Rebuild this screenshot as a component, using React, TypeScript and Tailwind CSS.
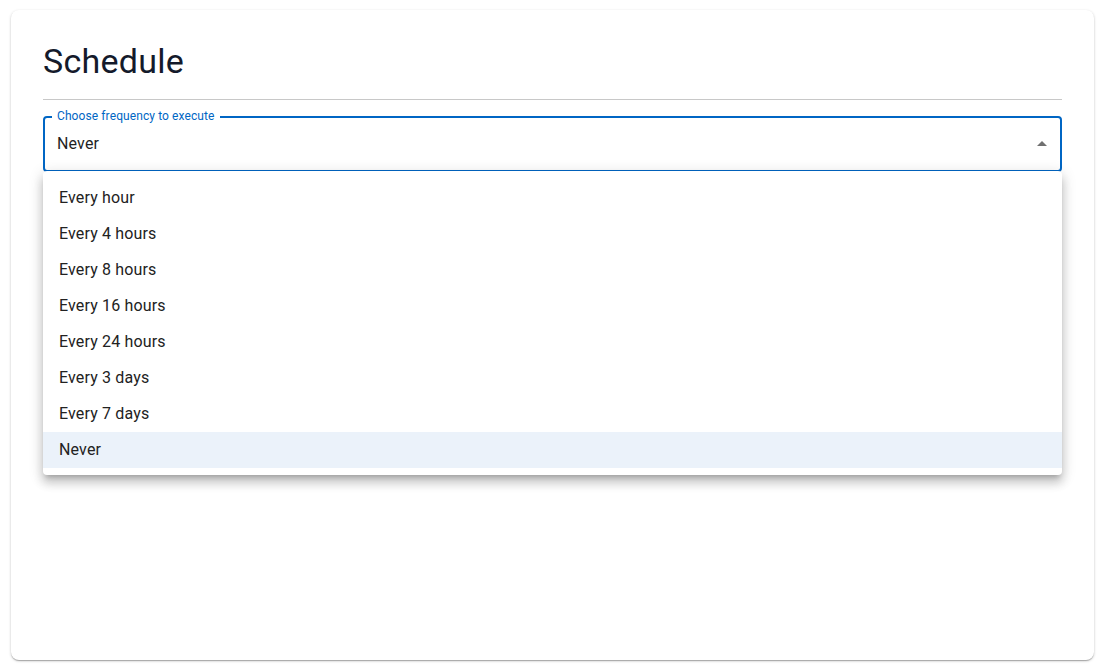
import React from "react";

const items = [
  "Every hour",
  "Every 4 hours",
  "Every 8 hours",
  "Every 16 hours",
  "Every 24 hours",
  "Every 3 days",
  "Every 7 days",
  "Never",
];

export default function App() {
  return (
    <div className="w-[1105px] h-[671px] bg-white p-[10px] pl-[11px] pr-[11px]" style={{ fontFamily: "Roboto, 'Liberation Sans', sans-serif" }}>
      <div className="relative h-[650px] rounded-[8px] bg-white px-[32px] pt-[32px] shadow-[0_1px_3px_rgba(0,0,0,0.2),0_1px_1px_rgba(0,0,0,0.14),0_2px_1px_-1px_rgba(0,0,0,0.12)]">
        <h1 className="text-[34px] leading-[38px] text-[#141a2b] font-normal tracking-[0.25px]">Schedule</h1>
        <div className="mt-[19px] h-px bg-[#c8c8c8]" />
        <div className="relative mt-[16px]">
          <div className="relative h-[56px] rounded-[4px] border-2 border-[#0066c4] flex items-center pl-[12px] pr-[6px]">
            <span className="text-[16px] text-[#1f1f1f] tracking-[0.15px]">Never</span>
            <span className="absolute -top-[10px] left-[7px] bg-white px-[5px] text-[12px] leading-[16px] text-[#0066c4] tracking-[0.1px]">
              Choose frequency to execute
            </span>
            <svg className="ml-auto" width="24" height="24" viewBox="0 0 24 24">
              <path d="M7 14l5-5 5 5z" fill="#707070" />
            </svg>
          </div>
          <div className="absolute left-0 top-[55px] w-[1019px] rounded-[4px] bg-white pt-[9px] pb-[7px] shadow-[0_5px_5px_-3px_rgba(0,0,0,0.2),0_8px_10px_1px_rgba(0,0,0,0.14),0_3px_14px_2px_rgba(0,0,0,0.12)] z-10">
            {items.map((it) => (
              <div
                key={it}
                className={
                  "h-[36px] flex items-center px-[16px] text-[16px] text-[#222] tracking-[0.15px] " +
                  (it === "Never" ? "bg-[#ebf2fa]" : "")
                }
              >
                {it}
              </div>
            ))}
          </div>
        </div>
      </div>
    </div>
  );
}
